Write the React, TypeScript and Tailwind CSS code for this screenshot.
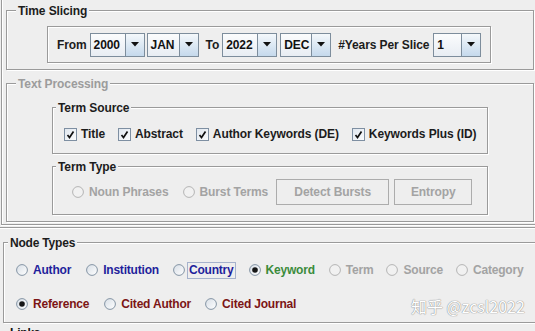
import React from 'react';

const line = 'border-[#9a9a9a]';

const Tri = () => (
    <svg width="8" height="5" viewBox="0 0 8 5">
        <path d="M0 0 L8 0 L4 4.5 Z" fill="#111" />
    </svg>
);

const Combo = ({ value, className }: { value: string; className: string }) => (
    <div className={`flex h-[24px] border border-[#7d8d9c] ${className}`}>
        <div className="flex flex-1 items-center bg-gradient-to-b from-[#fbfcfd] to-[#e8edf3] pl-[3px] text-[#111]">{value}</div>
        <div className="flex w-[19px] items-center justify-center border-l border-[#7d8d9c] bg-gradient-to-b from-[#f4f8fb] to-[#c5d9ec]">
            <Tri />
        </div>
    </div>
);

const Check = () => (
    <svg width="13" height="13" viewBox="0 0 13 13" className="shrink-0">
        <defs>
            <linearGradient id="cbg" x1="0" y1="0" x2="1" y2="1">
                <stop offset="0" stopColor="#dfe6ee" />
                <stop offset="1" stopColor="#fbfcfd" />
            </linearGradient>
        </defs>
        <rect x="0.5" y="0.5" width="12" height="12" fill="url(#cbg)" stroke="#7e8fa2" />
        <path d="M3.5 7 L5.5 9.5 L9.5 3.5" fill="none" stroke="#111" strokeWidth="1.7" />
    </svg>
);

const Radio = ({ on, off }: { on?: boolean; off?: boolean }) => (
    <svg width="12" height="12" viewBox="0 0 12 12" className="shrink-0">
        <defs>
            <linearGradient id="rbg" x1="0" y1="0" x2="1" y2="1">
                <stop offset="0" stopColor="#d7dee6" />
                <stop offset="1" stopColor="#ffffff" />
            </linearGradient>
        </defs>
        <circle cx="6" cy="6" r="5.4" fill={off ? '#f1f1f1' : 'url(#rbg)'} stroke={off ? '#b4b4b4' : '#8494a4'} />
        {on && <circle cx="6" cy="6" r="2.8" fill="#161616" />}
    </svg>
);

// Swing style titled etched border
const Titled = ({
    title,
    tick,
    titleClass = 'text-[#1c1c1c]',
    className,
    children,
}: {
    title: string;
    tick: string;
    titleClass?: string;
    className: string;
    children: React.ReactNode;
}) => (
    <div className={`flex flex-col border-x border-b ${line} shadow-[inset_1px_0_0_#fff,1px_1px_0_#fff] ${className}`}>
        <div className="-mt-[6px] flex h-[14px] items-center">
            <div className={`h-[2px] border-t ${line} bg-white ${tick}`} />
            <span className={`bg-[#eeeeee] px-[2px] leading-[14px] ${titleClass}`}>{title}</span>
            <div className={`h-[2px] flex-1 border-t ${line} bg-white`} />
        </div>
        {children}
    </div>
);

const NodeOpt = ({ label, color, on, off }: { label: string; color: string; on?: boolean; off?: boolean }) => (
    <div className="flex items-center gap-[5px]">
        <Radio on={on} off={off} />
        <span className={color}>{label}</span>
    </div>
);

export default function App() {
    return (
        <div
            className="relative h-[331px] w-[535px] overflow-hidden bg-[#eeeeee] text-[12px] font-bold leading-[14px] tracking-[-0.2px] text-[#1c1c1c]"
            style={{ fontFamily: '"Liberation Sans", Arial, sans-serif' }}
        >
            {/* upper panel */}
            <div className={`ml-[1px] flex h-[225px] w-[560px] flex-col border-b border-l ${line} pl-[4px] tracking-[-0.1px] shadow-[inset_1px_0_0_#fff,0_1px_0_#fff]`}>
                <Titled title="Time Slicing" tick="w-[9px]" className="mt-[10px] h-[60px] w-[528px]">
                    <div className="pl-[40px] pt-[8px]">
                        <div className={`flex h-[37px] w-[444px] items-center border ${line} pl-[9px] shadow-[inset_1px_1px_0_#fff,1px_1px_0_#fff]`}>
                            <span>From</span>
                            <Combo value="2000" className="ml-[3px] w-[55px]" />
                            <Combo value="JAN" className="ml-[2px] w-[52px]" />
                            <span className="ml-[7px]">To</span>
                            <Combo value="2022" className="ml-[3px] w-[55px]" />
                            <Combo value="DEC" className="ml-[3px] w-[51px]" />
                            <span className="ml-[7px]">#Years Per Slice</span>
                            <Combo value="1" className="ml-[4px] w-[48px]" />
                        </div>
                    </div>
                </Titled>

                <Titled
                    title="Text Processing"
                    tick="w-[9px]"
                    titleClass="text-[#9c9c9c]"
                    className="mt-[13px] h-[139px] w-[528px]"
                >
                    <div className="flex flex-col pl-[45px] pt-[16px]">
                        <Titled title="Term Source" tick="w-[3px]" className="h-[47px] w-[436px]">
                            <div className="mt-[11px] flex h-[16px] items-center gap-[13px] pl-[11px]">
                                {['Title', 'Abstract', 'Author Keywords (DE)', 'Keywords Plus (ID)'].map((t) => (
                                    <div key={t} className="flex items-center gap-[4px]">
                                        <Check />
                                        <span>{t}</span>
                                    </div>
                                ))}
                            </div>
                        </Titled>
                        <Titled title="Term Type" tick="w-[3px]" className="mt-[12px] h-[49px] w-[436px]">
                            <div className="mt-[5px] flex h-[26px] items-center pl-[19px] text-[#a3a3a3]">
                                <NodeOpt label="Noun Phrases" color="text-[#a3a3a3]" off />
                                <div className="ml-[14px]">
                                    <NodeOpt label="Burst Terms" color="text-[#a3a3a3]" off />
                                </div>
                                <div className="ml-[8px] flex h-[26px] w-[113px] items-center justify-center border border-[#acacac] bg-[#eeeeee]">
                                    Detect Bursts
                                </div>
                                <div className="ml-[5px] flex h-[26px] w-[78px] items-center justify-center border border-[#acacac] bg-[#eeeeee]">
                                    Entropy
                                </div>
                            </div>
                        </Titled>
                    </div>
                </Titled>
            </div>

            {/* lower panel */}
            <div className={`mt-[2px] flex w-[560px] flex-col border-t ${line} shadow-[inset_0_1px_0_#fff]`}>
                <Titled title="Node Types" tick="w-[4px]" className="ml-[3px] mt-[14px] h-[81px] w-[560px]">
                    <div className="mt-[12px] flex h-[16px] items-center pl-[12px]">
                        <NodeOpt label="Author" color="text-[#1f1f9c]" />
                        <div className="ml-[15px]">
                            <NodeOpt label="Institution" color="text-[#1f1f9c]" />
                        </div>
                        <div className="ml-[14px] flex items-center gap-[2px]">
                            <Radio />
                            <span className="border border-[#a6b2cc] px-[1px] leading-[15px] text-[#1f1f9c]">Country</span>
                        </div>
                        <div className="ml-[13px]">
                            <NodeOpt label="Keyword" color="text-[#3b8b3b]" on />
                        </div>
                        <div className="ml-[14px]">
                            <NodeOpt label="Term" color="text-[#a3a3a3]" off />
                        </div>
                        <div className="ml-[13px]">
                            <NodeOpt label="Source" color="text-[#a3a3a3]" off />
                        </div>
                        <div className="ml-[13px]">
                            <NodeOpt label="Category" color="text-[#a3a3a3]" off />
                        </div>
                    </div>
                    <div className="mt-[18px] flex h-[16px] items-center pl-[12px]">
                        <NodeOpt label="Reference" color="text-[#7c1515]" on />
                        <div className="ml-[15px]">
                            <NodeOpt label="Cited Author" color="text-[#7c1515]" />
                        </div>
                        <div className="ml-[14px]">
                            <NodeOpt label="Cited Journal" color="text-[#7c1515]" />
                        </div>
                    </div>
                </Titled>
                <div className="ml-[10px] mt-[3px] text-[#111]">Links</div>
            </div>

            {/* watermark */}
            <div
                className="absolute left-[411px] top-[296px] text-[16px] font-normal leading-[20px] tracking-normal text-white [text-shadow:0_0_1px_#888,0_0_1px_#888]"
                style={{ fontFamily: '"Noto Sans CJK SC", "Liberation Sans", sans-serif' }}
            >
                知乎 @zcsl2022
            </div>
        </div>
    );
}
